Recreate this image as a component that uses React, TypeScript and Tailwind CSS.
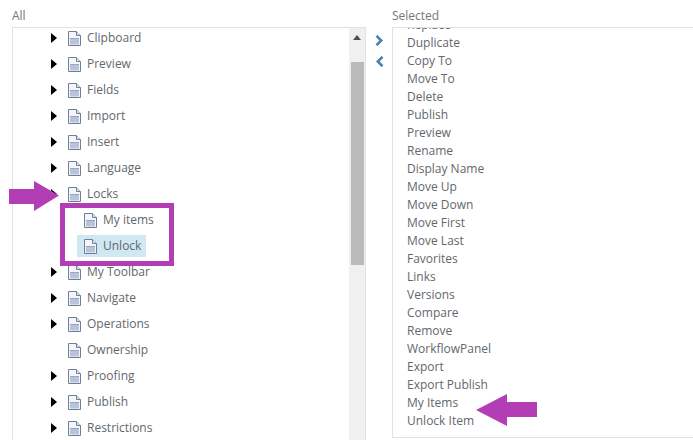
import React from 'react';

const treeTop = ['Clipboard', 'Preview', 'Fields', 'Import', 'Insert', 'Language'];
const treeBottom = ['My Toolbar', 'Navigate', 'Operations', 'Ownership', 'Proofing', 'Publish', 'Restrictions'];
const selected = [
  'Replace', 'Duplicate', 'Copy To', 'Move To', 'Delete', 'Publish', 'Preview', 'Rename', 'Display Name',
  'Move Up', 'Move Down', 'Move First', 'Move Last', 'Favorites', 'Links', 'Versions', 'Compare', 'Remove',
  'WorkflowPanel', 'Export', 'Export Publish', 'My Items', 'Unlock Item',
];

const DocIcon = () => (
  <svg width="13" height="15" viewBox="0 0 13 15" className="shrink-0">
    <path d="M.5.5h8l4 4v10H.5z" fill="#f4f6fa" stroke="#6f7f99" />
    <path d="M8.5.5v4h4" fill="#dfe5ee" stroke="#6f7f99" />
    <rect x="2" y="7" width="9" height="6.5" fill="#b9c4da" />
    <rect x="2" y="7" width="9" height="1" fill="#98a6c2" />
  </svg>
);

const Caret = () => (
  <svg width="6" height="10" viewBox="0 0 6 10" className="shrink-0">
    <path d="M0 0l6 5-6 5z" fill="#000" />
  </svg>
);

const Row = ({ label, caret = true }: { label: string; caret?: boolean }) => (
  <div className="flex h-[26px] items-center pl-[38px]">
    <span className="w-[17px]">{caret && <Caret />}</span>
    <DocIcon />
    <span className="ml-[6px]">{label}</span>
  </div>
);

export default function App() {
  return (
    <div className="relative h-[440px] w-[693px] overflow-hidden bg-white text-[12px] text-[#63676c] [font-family:'Open_Sans',sans-serif]">
      <div className="flex pl-3">
        <div className="w-[354px]">
          <div className="flex h-[27px] items-center pt-[4px] text-[#777777]">All</div>
          <div className="flex h-[413px] overflow-hidden border-l border-t border-[#e2e2e2]">
            <div className="mt-[-3px] min-w-0 flex-1">
              {treeTop.map(label => (
                <Row key={label} label={label} />
              ))}
              <Row label="Locks" />
              <div className="flex h-[26px] items-center pl-[71px]">
                <DocIcon />
                <span className="ml-[6px]">My items</span>
              </div>
              <div className="flex h-[26px] items-center pl-[64px]">
                <div className="flex h-[22px] w-[69px] items-center bg-[#cfe8f2] pl-[7px]">
                  <DocIcon />
                  <span className="ml-[6px]">Unlock</span>
                </div>
              </div>
              {treeBottom.map(label => (
                <Row key={label} label={label} caret={label !== 'Ownership'} />
              ))}
            </div>
            <div className="flex w-[17px] shrink-0 flex-col border-r border-[#e2e2e2] bg-[#f0f0f0] pl-[2px]">
              <svg width="8" height="5" viewBox="0 0 8 5" className="ml-[2px] mt-[7px]">
                <path d="M4 0l4 5H0z" fill="#505050" />
              </svg>
              <div className="mt-[22px] h-[203px] w-[13px] bg-[#bababa]" />
            </div>
          </div>
        </div>
        <div className="flex w-[26px] flex-col items-center gap-[10px] pt-[35px]">
          <svg width="9" height="11" viewBox="0 0 9 11">
            <path d="M1.5 .8l4.7 4.7-4.7 4.7" fill="none" stroke="#4d82ac" strokeWidth="2.6" />
          </svg>
          <svg width="9" height="11" viewBox="0 0 9 11">
            <path d="M7.5 .8L2.8 5.5l4.7 4.7" fill="none" stroke="#4d82ac" strokeWidth="2.6" />
          </svg>
        </div>
        <div className="flex-1">
          <div className="flex h-[27px] items-center pt-[4px] text-[#777777]">Selected</div>
          <div className="h-[411px] overflow-hidden border-b border-l border-t border-[#e2e2e2] pl-[14px]">
            <div className="mt-[-12px]">
              {selected.map(label => (
                <div key={label} className="flex h-[18px] items-center">
                  {label}
                </div>
              ))}
            </div>
          </div>
        </div>
      </div>

      <div className="absolute left-[60px] top-[203px] h-[63px] w-[114px] border-[5px] border-[#b23db5]" />
      <svg width="50" height="30" viewBox="0 0 50 30" className="absolute left-[9px] top-[181px]">
        <path d="M50 14.5L25 0v8H0v15h25v7z" fill="#b23db5" />
      </svg>
      <svg width="61" height="32" viewBox="0 0 61 32" className="absolute left-[476px] top-[394px]">
        <path d="M0 16L31 0v8h30v15H31v9z" fill="#b23db5" />
      </svg>
    </div>
  );
}
